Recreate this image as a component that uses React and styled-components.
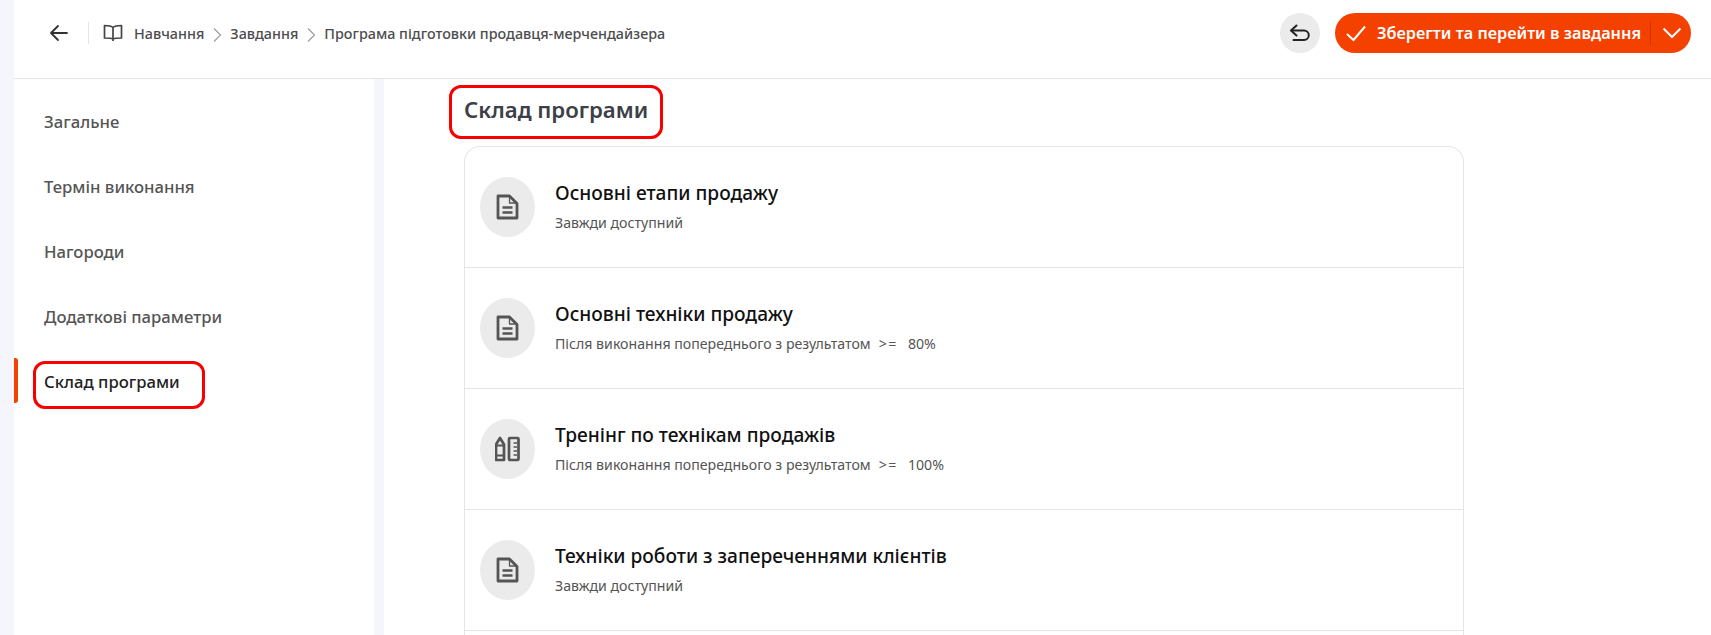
import React from 'react';
import styled, { createGlobalStyle } from 'styled-components';

const GlobalStyle = createGlobalStyle`
  html, body {
    margin: 0;
    height: 100%;
    overflow: hidden;
    background: #f4f6fb;
    font-family: "Noto Sans", "Open Sans", sans-serif;
  }
`;

const Page = styled.div`
  height: 635px;
  margin-left: 14px;
  display: flex;
  flex-direction: column;
  background: #fff;
`;

const Header = styled.header`
  height: 79px;
  flex: none;
  box-sizing: border-box;
  border-bottom: 1px solid #e5e5e5;
  padding: 13px 20px 0 35px;
  display: flex;
  align-items: flex-start;
  justify-content: space-between;
`;

const HeaderLeft = styled.div`
  height: 40px;
  display: flex;
  align-items: center;
  color: #333;
`;

const BackLink = styled.div`
  display: flex;
  padding-right: 19px;
  border-right: 1px solid #e5e5e5;
  height: 22px;
  align-items: center;
`;

const Crumbs = styled.nav`
  display: flex;
  align-items: center;
  margin-left: 14px;
  font-size: 14.35px;
  font-weight: 500;
  color: #4d4d4d;
  gap: 4px;
  white-space: nowrap;

  svg {
    flex: none;
  }
`;

const BookWrap = styled.span`
  display: flex;
  margin-right: 7px;
  color: #444;
`;

const CrumbSep = styled.span`
  display: flex;
  margin-top: 4px;
  color: #999;
`;

const HeaderRight = styled.div`
  display: flex;
  gap: 15px;
`;

const RoundButton = styled.button`
  width: 40px;
  height: 40px;
  border: 0;
  padding: 0;
  border-radius: 50%;
  background: #ebebeb;
  display: flex;
  align-items: center;
  justify-content: center;
  color: #222;
`;

const SaveButton = styled.button`
  width: 356px;
  height: 40px;
  box-sizing: border-box;
  border: 0;
  padding: 0 9px 0 9px;
  border-radius: 20px;
  background: #f54100;
  color: #fff;
  display: flex;
  align-items: center;
  font-family: inherit;
  font-size: 16.3px;
  font-weight: 600;
  white-space: nowrap;
`;

const SaveLabel = styled.span`
  margin-left: 9px;
  flex: 1;
  text-align: left;
`;

const SaveSplit = styled.span`
  width: 1px;
  height: 24px;
  background: #c8340a;
  margin-right: 11px;
`;

const Body = styled.div`
  flex: 1;
  min-height: 0;
  display: flex;
`;

const Sidebar = styled.aside`
  width: 370px;
  flex: none;
  box-sizing: border-box;
  border-right: 10px solid #f4f6fb;
  padding-top: 10px;
`;

const NavItem = styled.div`
  height: 65px;
  display: flex;
  align-items: center;
  padding-left: 30px;
  position: relative;
  font-size: 16.7px;
  font-weight: 500;
  color: ${p => (p.$active ? '#222' : '#555')};
`;

const NavMarker = styled.span`
  position: absolute;
  left: 0;
  top: 9px;
  width: 4px;
  height: 45px;
  border-radius: 0 3px 3px 0;
  background: #f54100;
`;

const Callout = styled.span`
  position: absolute;
  border: 3px solid #f70000;
  border-radius: 12px;
  left: 19px;
  top: 12px;
  width: 172px;
  height: 48px;
  box-sizing: border-box;
`;

const Main = styled.main`
  flex: 1;
  min-width: 0;
  padding-left: 80px;
  display: flex;
  flex-direction: column;
  overflow: hidden;
`;

const TitleWrap = styled.div`
  height: 67px;
  flex: none;
  display: flex;
  align-items: flex-start;
`;

const Title = styled.h2`
  margin: 6px 0 0 -15px;
  width: 214px;
  height: 54px;
  box-sizing: border-box;
  padding: 0 0 5px 12px;
  display: flex;
  align-items: center;
  border: 3px solid #f70000;
  border-radius: 12px;
  font-size: 22.2px;
  font-weight: 600;
  color: #3d4047;
`;

const List = styled.div`
  width: 1000px;
  flex: 1;
  box-sizing: border-box;
  border: 1px solid #e5e5e5;
  border-bottom: 0;
  border-radius: 16px 16px 0 0;
`;

const Row = styled.div`
  height: 121px;
  box-sizing: border-box;
  border-bottom: 1px solid #e5e5e5;
  padding: 30px 15px 0;
  display: flex;
  align-items: flex-start;
`;

const IconBubble = styled.div`
  width: 55px;
  height: 60px;
  flex: none;
  border-radius: 50%;
  background: #ebebeb;
  display: flex;
  align-items: center;
  justify-content: center;
  color: #555;
`;

const RowText = styled.div`
  margin-left: 20px;
  padding-top: 3px;
`;

const RowTitle = styled.div`
  font-size: 19.15px;
  font-weight: 500;
  line-height: 26px;
  color: #111;
`;

const RowSub = styled.div`
  margin-top: 7px;
  font-size: 14.15px;
  line-height: 20px;
  color: #555;
  white-space: nowrap;
`;

const Cmp = styled.span`
  margin: 0 10px 0 8px;
  letter-spacing: 1.5px;
`;

const DocIcon = () => (
  <svg width="24" height="26" viewBox="0 0 24 26" fill="none" stroke="currentColor" strokeWidth="2.8" strokeLinejoin="round">
    <path d="M2 2h11.500L21 9.500V24H2z" />
    <path d="M13.500 2.500v6.500h7" strokeWidth="1.300" />
    <path d="M6.500 13.500h10M6.500 18.500h10" strokeWidth="2.300" />
  </svg>
);

const ToolsIcon = () => (
  <svg width="26" height="26" viewBox="0 0 26 26" fill="none" stroke="currentColor" strokeWidth="2.700" strokeLinejoin="round">
    <path d="M1 8.500 5 2l4 6.500V24H1z" />
    <path d="M1 9.500h8M1 19.500h8" strokeWidth="2" />
    <rect x="14" y="2" width="9.500" height="22" rx="1" />
    <path d="M18.500 7h3.500M18.500 11h3.500M18.500 15h3.500M18.500 19h3.500" strokeWidth="1.600" />
  </svg>
);

const ArrowIcon = () => (
  <svg width="20" height="18" viewBox="0 0 20 18" fill="none" stroke="currentColor" strokeWidth="1.800" strokeLinecap="round" strokeLinejoin="round">
    <path d="M18 9H2.500M9 2 2 9l7 7" />
  </svg>
);

const BookIcon = () => (
  <svg width="20" height="18" viewBox="0 0 20 18" fill="none" stroke="currentColor" strokeWidth="1.700" strokeLinejoin="round">
    <path d="M10 3.500C8.500 2 6 1.500 1.500 1.500v12.500C6 14 8.500 14 10 15c1.500-1 4-1 8.500-1V1.500C14 1.500 11.500 2 10 3.500zM10 3.500V17" />
  </svg>
);

const SepIcon = () => (
  <svg width="18" height="18" viewBox="0 0 18 18" fill="none" stroke="currentColor" strokeWidth="1.100">
    <path d="m6 2.500 6.500 6.500L6 15.500" />
  </svg>
);

const UndoIcon = () => (
  <svg width="22" height="18" viewBox="0 0 22 18" fill="none" stroke="currentColor" strokeWidth="2" strokeLinecap="round" strokeLinejoin="round">
    <path d="M7.500 1.500 2 6.500l5.500 5" />
    <path d="M2.500 6.500H15a4.500 4.500 0 0 1 0 9.500H4.500" />
  </svg>
);

const CheckIcon = () => (
  <svg width="24" height="24" viewBox="0 0 24 24" fill="none" stroke="currentColor" strokeWidth="2">
    <path d="m3 13 6.500 6L21 5.500" />
  </svg>
);

const CaretIcon = () => (
  <svg width="20" height="24" viewBox="0 0 20 24" fill="none" stroke="currentColor" strokeWidth="2">
    <path d="m1.500 7.500 8.500 8.500 8.500-8.500" />
  </svg>
);

const sections = ['Загальне', 'Термін виконання', 'Нагороди', 'Додаткові параметри', 'Склад програми'];

const afterPrev = 'Після виконання попереднього з результатом';

const lessons = [
  { title: 'Основні етапи продажу', Icon: DocIcon },
  { title: 'Основні техніки продажу', score: '80%', Icon: DocIcon },
  { title: 'Тренінг по технікам продажів', score: '100%', Icon: ToolsIcon },
  { title: 'Техніки роботи з запереченнями клієнтів', Icon: DocIcon },
];

export default function App() {
  return (
    <>
      <GlobalStyle />
      <Page>
        <Header>
          <HeaderLeft>
            <BackLink>
              <ArrowIcon />
            </BackLink>
            <Crumbs>
              <BookWrap>
                <BookIcon />
              </BookWrap>
              <span>Навчання</span>
              <CrumbSep><SepIcon /></CrumbSep>
              <span>Завдання</span>
              <CrumbSep><SepIcon /></CrumbSep>
              <span>Програма підготовки продавця-мерчендайзера</span>
            </Crumbs>
          </HeaderLeft>
          <HeaderRight>
            <RoundButton>
              <UndoIcon />
            </RoundButton>
            <SaveButton>
              <CheckIcon />
              <SaveLabel>Зберегти та перейти в завдання</SaveLabel>
              <SaveSplit />
              <CaretIcon />
            </SaveButton>
          </HeaderRight>
        </Header>
        <Body>
          <Sidebar>
            {sections.map((name, i) => {
              const active = i === sections.length - 1;
              return (
                <NavItem key={name} $active={active}>
                  {active && <NavMarker />}
                  {active && <Callout />}
                  {name}
                </NavItem>
              );
            })}
          </Sidebar>
          <Main>
            <TitleWrap>
              <Title>Склад програми</Title>
            </TitleWrap>
            <List>
              {lessons.map(({ title, score, Icon }) => (
                <Row key={title}>
                  <IconBubble>
                    <Icon />
                  </IconBubble>
                  <RowText>
                    <RowTitle>{title}</RowTitle>
                    <RowSub>
                      {score ? (
                        <>
                          {afterPrev}
                          <Cmp>{'>='}</Cmp>
                          {score}
                        </>
                      ) : (
                        'Завжди доступний'
                      )}
                    </RowSub>
                  </RowText>
                </Row>
              ))}
            </List>
          </Main>
        </Body>
      </Page>
    </>
  );
}
